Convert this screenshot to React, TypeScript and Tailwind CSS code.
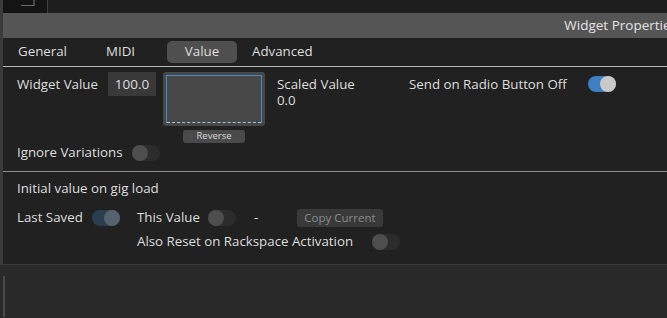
import React from "react";

const font = { fontFamily: '"Open Sans", "Noto Sans", sans-serif' };

type ToggleKind = "on" | "dim" | "off";

function Toggle({ kind }: { kind: ToggleKind }) {
  const track =
    kind === "on" ? "bg-[#3d7fc0]" : kind === "dim" ? "bg-[#2b3d50]" : "bg-[#2c2c2c]";
  const knob =
    kind === "on" ? "bg-[#c9c9c9]" : kind === "dim" ? "bg-[#56626e]" : "bg-[#4e4e4e]";
  return (
    <div className={`relative w-[28px] h-[16px] rounded-full shrink-0 ${track}`}>
      <div
        className={`absolute top-0 h-[16px] w-[16px] rounded-full ${knob} ${
          kind === "off" ? "left-0" : "right-0"
        }`}
      />
    </div>
  );
}

export default function App() {
  return (
    <div
      style={font}
      className="w-[667px] h-[318px] overflow-hidden bg-[#212121] flex flex-col text-[#dedede] text-[13.3px]"
    >
      {/* top strip */}
      <div className="h-[13px] flex shrink-0 bg-[#1e1e1e]">
        <div className="w-[3px] bg-[#3b3b3b]" />
        <div className="w-[45px] bg-[#141414] border-r border-[#3e3e3e] flex justify-end pr-[12px]">
          <svg width="14" height="7" viewBox="0 0 14 7">
            <path d="M13 0 V5.5 H0" fill="none" stroke="#6a6a6a" strokeWidth="1.2" />
          </svg>
        </div>
        <div className="flex-1" />
      </div>

      {/* panel */}
      <div className="flex h-[251px] shrink-0">
        <div className="w-[3px] bg-[#3b3b3b]" />
        <div className="flex-1 flex flex-col min-w-0">
          <div className="h-[25px] shrink-0 bg-[#555555] flex items-center justify-end overflow-hidden whitespace-nowrap">
            <span className="text-[13.5px] text-[#e4e4e4] -mr-[10px]">Widget Properties</span>
          </div>

          {/* tabs */}
          <div className="h-[28px] shrink-0 flex items-center">
            <span className="ml-[15px] w-[88px]">General</span>
            <span className="w-[61px]">MIDI</span>
            <span className="w-[70px] h-[22px] rounded-[5px] bg-[#4f4f4f] flex items-center justify-center">
              Value
            </span>
            <span className="ml-[15px]">Advanced</span>
          </div>
          <div className="h-px shrink-0 bg-[#b8b8b8]" />

          {/* value section */}
          <div className="flex items-start pl-[14px] pt-[5px] h-[78px] shrink-0">
            <span className="w-[91px] h-[24px] leading-[24px] whitespace-nowrap">Widget Value</span>
            <div className="w-[48px] h-[24px] bg-[#393939] flex items-center justify-center text-[13.5px]">
              100.0
            </div>
            <div className="ml-[7px] flex flex-col items-center">
              <div className="w-[102px] h-[54px] rounded-[3px] bg-[#474747] p-[3px]">
                <div className="w-full h-full border border-[#4a8ac6] border-b-0 flex flex-col justify-end">
                  <div className="h-0 border-b border-dashed border-[#a9c3dc]" />
                </div>
              </div>
              <div className="mt-[4px] w-[62px] h-[13px] rounded-[3px] bg-[#4a4a4a] flex items-center justify-center text-[9.5px] text-[#d8d8d8]">
                Reverse
              </div>
            </div>
            <div className="ml-[12px] w-[132px] pt-[4px] leading-[16px]">
              <div className="whitespace-nowrap">Scaled Value</div>
              <div>0.0</div>
            </div>
            <span className="w-[179px] h-[24px] leading-[24px] whitespace-nowrap">
              Send on Radio Button Off
            </span>
            <div className="mt-[4px]">
              <Toggle kind="on" />
            </div>
          </div>

          <div className="flex items-center pl-[14px] h-[16px] shrink-0">
            <span className="w-[115px] whitespace-nowrap">Ignore Variations</span>
            <Toggle kind="off" />
          </div>

          <div className="h-[10px] shrink-0" />
          <div className="h-px shrink-0 bg-[#8e8e8e]" />

          {/* initial value section */}
          <div className="pl-[14px] mt-[8px] h-[16px] shrink-0 leading-[16px] whitespace-nowrap">
            Initial value on gig load
          </div>
          <div className="flex items-center pl-[14px] mt-[13px] h-[18px] shrink-0">
            <span className="w-[75px] whitespace-nowrap">Last Saved</span>
            <Toggle kind="dim" />
            <span className="ml-[17px] w-[71px] whitespace-nowrap">This Value</span>
            <Toggle kind="off" />
            <span className="ml-[18px] w-[43px]">-</span>
            <div className="w-[86px] h-[18px] rounded-[3px] bg-[#393939] flex items-center justify-center text-[11.5px] text-[#8c8c8c]">
              Copy Current
            </div>
          </div>
          <div className="flex items-center pl-[134px] mt-[7px] h-[16px] shrink-0">
            <span className="w-[235px] whitespace-nowrap">Also Reset on Rackspace Activation</span>
            <Toggle kind="off" />
          </div>
        </div>
      </div>

      {/* bottom area */}
      <div className="flex-1 bg-[#292929] border-t border-[#3c3c3c] flex">
        <div className="ml-[3px] mt-[11px] w-[2px] h-[41px] bg-[#4a4a4a]" />
      </div>
    </div>
  );
}
